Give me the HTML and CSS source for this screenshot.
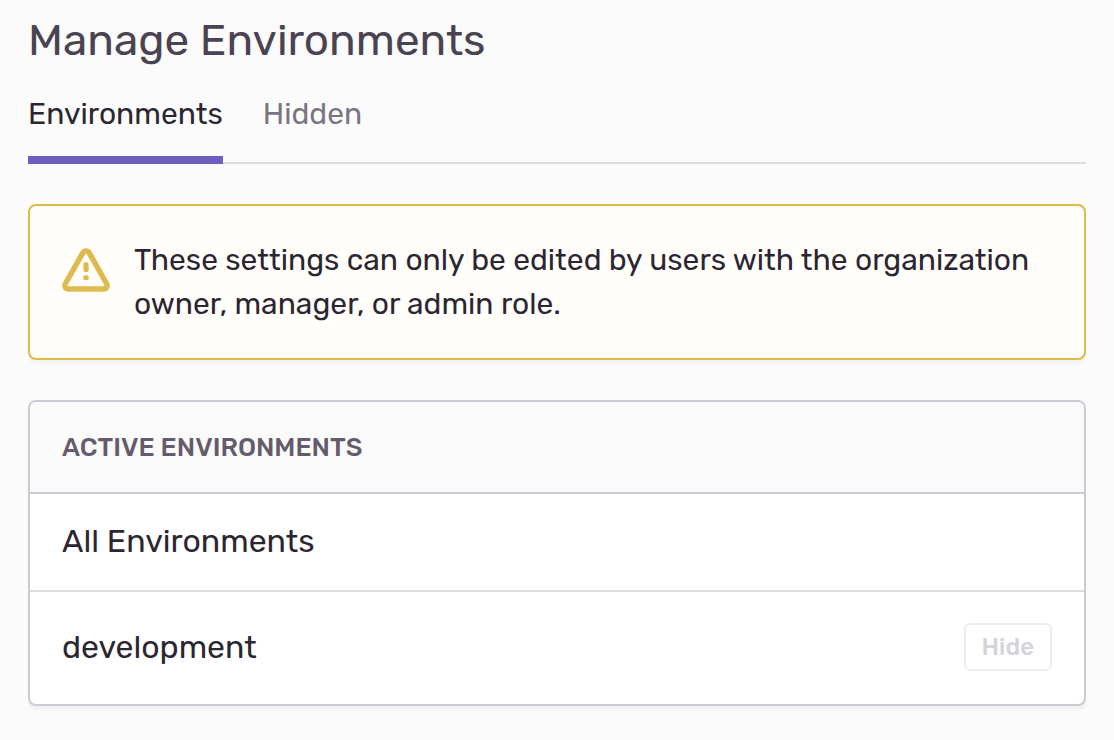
FILE: index.html
```html
<!DOCTYPE html>
<html lang="en">
<head>
<meta charset="utf-8">
<meta name="viewport" content="width=device-width, initial-scale=1">
<title>Manage Environments</title>
<link rel="stylesheet" href="styles.css">
</head>
<body>
<main class="page">
  <h1 class="title">Manage Environments</h1>
  <nav class="tabs">
    <a class="tab tab-active" href="#environments" aria-current="page">Environments</a>
    <a class="tab" href="#hidden">Hidden</a>
  </nav>
  <div class="alert" role="note">
    <svg class="alert-icon" viewBox="0 0 48 48" aria-hidden="true">
      <path d="M20.800 6.800 3.500 37.500C2 40.500 3.500 43 6.500 43H41.500C44.500 43 46 40.500 44.500 37.500L27.200 6.800C25.700 4.300 22.300 4.300 20.800 6.800Z" fill="none" stroke="currentColor" stroke-width="5.500" stroke-linejoin="round"/>
      <path d="M24 18.600V23.400" stroke="currentColor" stroke-width="5.200" stroke-linecap="round"/>
      <rect x="21.300" y="29.300" width="5.400" height="5" rx="2" fill="currentColor"/>
    </svg>
    <p class="alert-text">These settings can only be edited by users with the organization owner, manager, or admin role.</p>
  </div>
  <section class="panel">
    <h2 class="panel-header">Active Environments</h2>
    <ul class="list">
      <li class="row row-all"><span>All Environments</span></li>
      <li class="row row-env"><span>development</span><button class="hide-button" type="button" disabled>Hide</button></li>
    </ul>
  </section>
</main>
</body>
</html>
```
FILE: styles.css
```css
* { box-sizing: border-box; }
body {
  margin: 0;
  background: #fbfbfb;
  color: #2b2631;
  font-family: Rubik, Roboto, "Liberation Sans", sans-serif;
}
.page { padding: 12px 28px 34px; }
.title {
  margin: 0;
  color: #4a4351;
  font-size: 44px;
  font-weight: 400;
  line-height: 56px;
}
.tabs {
  display: flex;
  gap: 40px;
  margin-top: 24px;
  border-bottom: 2px solid #dddce3;
}
.tab {
  margin-bottom: -2px;
  padding-bottom: 20px;
  border-bottom: 8px solid transparent;
  color: #7b7482;
  font-size: 30px;
  line-height: 44px;
  text-decoration: none;
}
.tab-active { border-color: #6c5fc0; color: #2b2631; }
.alert {
  display: flex;
  gap: 24px;
  margin-top: 40px;
  padding: 32px;
  border: 2px solid #debb47;
  border-radius: 8px;
  background: #fffefa;
  box-shadow: 0 4px 2px #2b263108;
}
.alert-icon { flex: none; width: 48px; height: 48px; margin-top: 8px; color: #debb4e; }
.alert-text { margin: 0; font-size: 30px; line-height: 44px; }
.panel {
  margin-top: 40px;
  border: 2px solid #cccad2;
  border-radius: 8px;
  background: #fff;
  box-shadow: 0 4px 2px #2b26310a;
}
.panel-header {
  margin: 0;
  padding: 29px 32px 27px;
  border-bottom: 2px solid #cccad2;
  border-radius: 6px 6px 0 0;
  background: #fafafa;
  color: #645c6c;
  font-size: 26px;
  font-weight: 500;
  line-height: 34px;
  text-transform: uppercase;
}
.list { margin: 0; padding: 0; list-style: none; }
.row {
  display: flex;
  align-items: center;
  justify-content: space-between;
  padding: 31px 32px 33px;
  font-size: 32px;
  line-height: 48px;
}
.row-all { padding: 23px 32px 25px; }
.row-env { border-top: 2px solid #dddce3; }
.hide-button {
  height: 48px;
  padding: 0 16px;
  border: 2px solid #eeedf0;
  border-radius: 6px;
  background: #fff;
  color: #d6d2dc;
  font: 500 24px/44px Rubik, Roboto, "Liberation Sans", sans-serif;
}
```
